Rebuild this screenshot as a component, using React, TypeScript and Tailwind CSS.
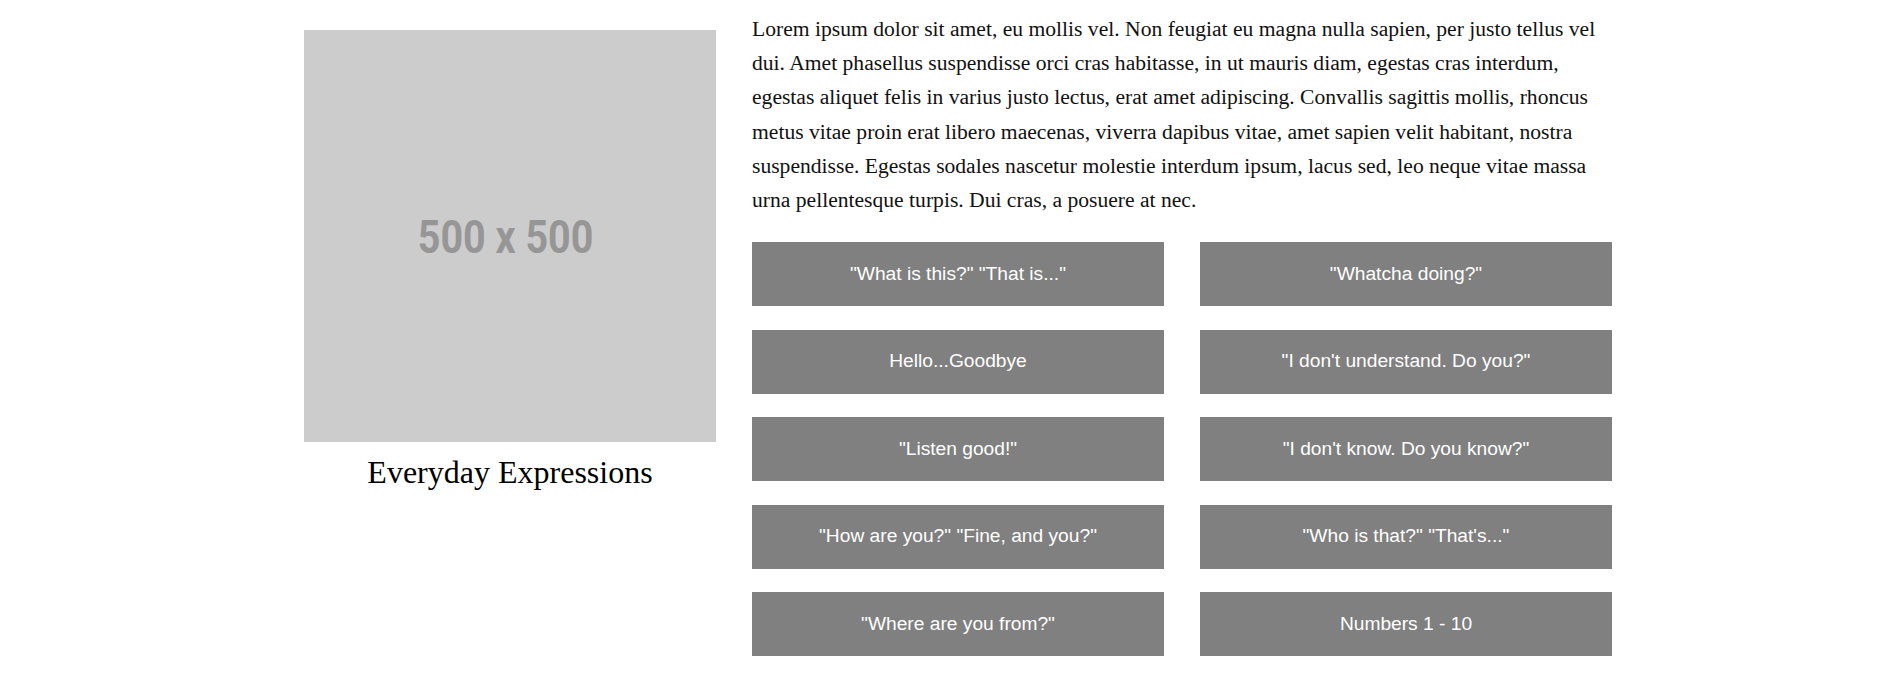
const phrases = [
  "\"What is this?\" \"That is...\"",
  "\"Whatcha doing?\"",
  "Hello...Goodbye",
  "\"I don't understand. Do you?\"",
  "\"Listen good!\"",
  "\"I don't know. Do you know?\"",
  "\"How are you?\" \"Fine, and you?\"",
  "\"Who is that?\" \"That's...\"",
  "\"Where are you from?\"",
  "Numbers 1 - 10",
];

export default function App() {
  return (
    <div className="min-h-[688px] bg-white font-['Liberation_Serif',serif] text-black">
      <div className="ml-[304px] flex gap-9">
        {/* left: placeholder picture + title */}
        <div className="w-[412px] shrink-0 pt-[30px]">
          <div className="flex h-[412px] w-[412px] items-center justify-center bg-[#cccccc] pr-2">
            <span className="scale-x-[0.84] font-['Roboto','Liberation_Sans',sans-serif] text-[47px] font-bold leading-none text-[#969696]">
              500 x 500
            </span>
          </div>
          <h2 className="mt-[12px] text-center text-[32px] leading-[1.15] font-normal">
            Everyday Expressions
          </h2>
        </div>

        {/* right: intro text + phrase buttons */}
        <div className="w-[864px] shrink-0 pt-[12px]">
          <p className="text-[21.6px] leading-[34.2px] text-[#111]">
            Lorem ipsum dolor sit amet, eu mollis vel. Non feugiat eu magna nulla sapien, per justo tellus vel
            dui. Amet phasellus suspendisse orci cras habitasse, in ut mauris diam, egestas cras interdum,
            egestas aliquet felis in varius justo lectus, erat amet adipiscing. Convallis sagittis mollis, rhoncus
            metus vitae proin erat libero maecenas, viverra dapibus vitae, amet sapien velit habitant, nostra
            suspendisse. Egestas sodales nascetur molestie interdum ipsum, lacus sed, leo neque vitae massa
            urna pellentesque turpis. Dui cras, a posuere at nec.
          </p>
          <div className="mt-[25px] grid grid-cols-[412px_412px] gap-x-[36px] gap-y-[23.5px]">
            {phrases.map((p) => (
              <button
                key={p}
                className="flex h-16 items-center justify-center bg-[#808080] font-['Liberation_Sans',Arial,sans-serif] text-[19.2px] text-white"
              >
                {p}
              </button>
            ))}
          </div>
        </div>
      </div>
    </div>
  );
}
